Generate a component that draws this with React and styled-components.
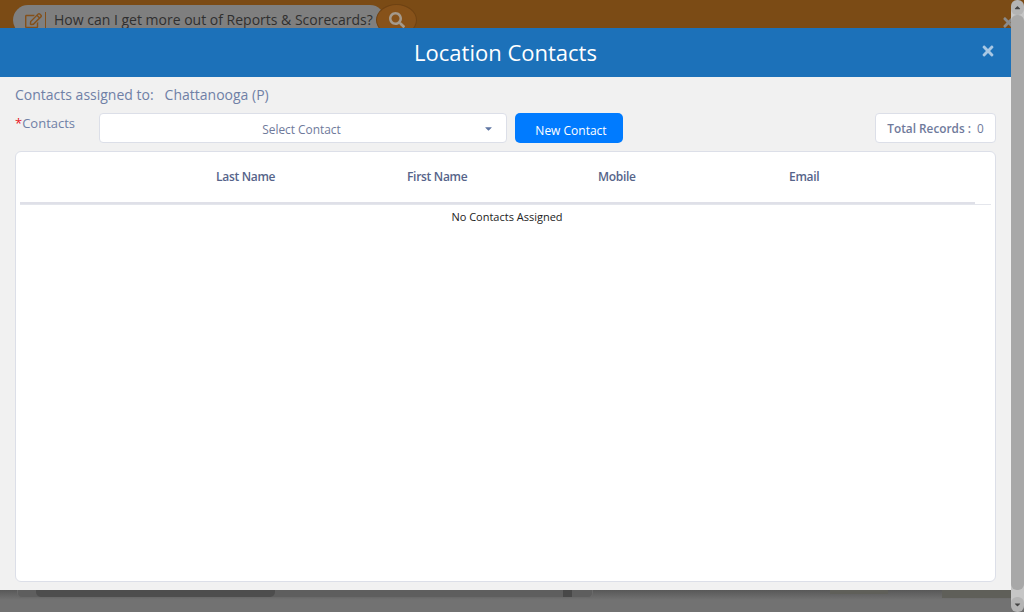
import React from 'react';
import styled, { createGlobalStyle } from 'styled-components';
import { FaSearch, FaRegEdit, FaTimes, FaCaretDown, FaCaretUp } from 'react-icons/fa';

const GlobalStyle = createGlobalStyle`
  html, body {
    margin: 0;
    height: 100%;
    overflow: hidden;
    font-family: "Open Sans", "Liberation Sans", sans-serif;
  }
`;

const Page = styled.div`
  display: flex;
  width: 1024px;
  height: 612px;
  overflow: hidden;
  position: relative;
`;

const Main = styled.div`
  display: flex;
  flex-direction: column;
  flex: 1;
  min-width: 0;
`;

// dimmed page behind the modal
const TopStrip = styled.div`
  height: 28px;
  flex: none;
  background: #7b4b15;
  padding: 5px 0 0 13px;
  box-sizing: border-box;
  overflow: hidden;
  display: flex;
  align-items: flex-start;
`;

const SearchPill = styled.div`
  display: flex;
  align-items: center;
  width: 372px;
  height: 30px;
  flex: none;
  padding-left: 12px;
  box-sizing: border-box;
  background: #7f7f7f;
  border-radius: 15px;
  color: #2f2f2f;
  font-size: 14px;
  line-height: 16px;
  white-space: nowrap;
`;

const PillIcon = styled.span`
  display: flex;
  color: #84501a;
  font-size: 17px;
  padding-right: 3px;
  margin-right: 8px;
  border-right: 1px solid #84501a;
  height: 17px;
`;

const SearchButton = styled.div`
  width: 41px;
  height: 32px;
  margin: -1px 0 0 -9px;
  flex: none;
  position: relative;
  display: flex;
  align-items: center;
  justify-content: center;
  background: #87521a;
  border: 1px solid #6e4213;
  border-radius: 50%;
  color: #a59a8c;
  font-size: 16px;
  box-sizing: border-box;
`;

const GhostClose = styled.span`
  position: absolute;
  top: 15px;
  left: 1001px;
  display: flex;
  color: #8b8b8b;
  font-size: 15px;
`;

const Modal = styled.div`
  flex: none;
  height: 562px;
  display: flex;
  flex-direction: column;
  background: #f1f1f1;
  position: relative;
`;

const ModalHeader = styled.div`
  height: 49px;
  flex: none;
  padding-bottom: 2px;
  box-sizing: border-box;
  display: flex;
  align-items: center;
  justify-content: center;
  background: #1c71b9;
  color: #fff;
`;

const ModalTitle = styled.h2`
  margin: 0;
  font-size: 22px;
  font-weight: 400;
`;

const CloseButton = styled.span`
  position: absolute;
  top: 15px;
  right: 15px;
  display: flex;
  color: #a9c8e4;
  font-size: 16px;
`;

const ModalBody = styled.div`
  flex: 1;
  display: flex;
  flex-direction: column;
  padding: 0 15px 8px;
  min-height: 0;
`;

const AssignedRow = styled.div`
  height: 36px;
  flex: none;
  padding-bottom: 2px;
  box-sizing: border-box;
  display: flex;
  align-items: center;
  gap: 11px;
  color: #6f80a6;
  font-size: 14px;
`;

const ControlsRow = styled.div`
  display: flex;
  align-items: flex-start;
  height: 30px;
  flex: none;
`;

const ContactsLabel = styled.label`
  width: 84px;
  flex: none;
  color: #6f80a6;
  font-size: 13px;
  line-height: 20px;
`;

const Required = styled.span`
  color: #e8141c;
`;

const SelectBox = styled.div`
  width: 408px;
  height: 30px;
  flex: none;
  position: relative;
  display: flex;
  align-items: center;
  justify-content: center;
  padding: 1px 3px 0 0;
  box-sizing: border-box;
  background: #fff;
  border: 1px solid #dcdfe8;
  border-radius: 4px;
  color: #6f7a9b;
  font-size: 11.9px;
`;

const Caret = styled.span`
  position: absolute;
  right: 12px;
  top: 9px;
  display: flex;
  color: #5f76a3;
  font-size: 11px;
`;

const NewButton = styled.button`
  width: 108px;
  height: 30px;
  flex: none;
  margin-left: 8px;
  padding: 4px 0 0 4px;
  border: none;
  border-radius: 5px;
  background: #007bff;
  color: #fff;
  font-family: inherit;
  font-size: 12px;
`;

const TotalBox = styled.div`
  width: 121px;
  height: 30px;
  flex: none;
  margin-left: auto;
  display: flex;
  align-items: center;
  justify-content: center;
  gap: 6px;
  box-sizing: border-box;
  background: #fff;
  border: 1px solid #dcdfe8;
  border-radius: 4px;
  color: #6f7a9b;
  font-size: 11.8px;
`;

const TotalLabel = styled.span`
  font-weight: 600;
`;

const TableCard = styled.div`
  flex: 1;
  margin-top: 8px;
  padding: 0 4px;
  background: #fff;
  border: 1px solid #dcdfe8;
  border-radius: 6px;
  min-height: 0;
`;

const HeadRow = styled.div`
  display: grid;
  grid-template-columns: repeat(4, 191px);
  height: 53px;
  width: 955px;
  padding: 0 0 1px 196px;
  box-sizing: border-box;
  align-items: center;
  border-bottom: 3px solid #dfe0e8;
  color: #56648a;
  font-size: 12px;
  font-weight: 600;
  letter-spacing: -0.3px;
`;

const HeadRule = styled.div`
  height: 1px;
  margin-top: -1px;
  background: #e4e6ec;
`;

const EmptyRow = styled.div`
  padding-left: 3px;
  text-align: center;
  color: #222;
  font-size: 11px;
  line-height: 24px;
`;

const BottomStrip = styled.div`
  flex: 1;
  display: flex;
  align-items: flex-start;
  background: linear-gradient(#585858, #727272 10px);
`;

const BehindScrollTrack = styled.div`
  width: 576px;
  height: 8px;
  margin-left: 17px;
  flex: none;
  display: flex;
  box-sizing: border-box;
  border: 1px solid #6a6a6a;
  border-top: none;
  border-radius: 0 0 5px 5px;
  background: #5e5e5e;
`;

const BehindThumb = styled.div`
  width: 239px;
  margin-left: 18px;
  background: #4d4d4d;
  border-radius: 0 0 5px 5px;
`;

const BehindArrowCap = styled.div`
  width: 9px;
  margin-left: 288px;
  background: #484848;
`;

const BehindTab = styled.div`
  flex: none;
  width: ${p => p.$width}px;
  height: ${p => p.$height}px;
  margin-left: ${p => p.$left}px;
  background: #5f5f59;
`;

const Scrollbar = styled.div`
  width: 13px;
  flex: none;
  position: relative;
  z-index: 1;
  display: flex;
  flex-direction: column;
  align-items: center;
  background: linear-gradient(#7b4b15 8px, #c6c6c6 8px, #c6c6c6 604px, #707070 604px);
`;

const ScrollArrow = styled.span`
  height: 15px;
  width: 100%;
  flex: none;
  display: flex;
  align-items: center;
  justify-content: center;
  border-radius: 6px;
  background: #b4b4b4;
  color: #444;
  font-size: 9px;
`;

const ScrollThumb = styled.div`
  flex: 1;
  width: 100%;
  margin-bottom: 7px;
  border-radius: 6px;
  background: #a8a8a8;
`;

const columns = ['Last Name', 'First Name', 'Mobile', 'Email'];

export default function App() {
  return (
    <Page>
      <GlobalStyle />
      <Main>
        <TopStrip>
          <SearchPill>
            <PillIcon><FaRegEdit /></PillIcon>
            How can I get more out of Reports &amp; Scorecards?
          </SearchPill>
          <SearchButton><FaSearch /></SearchButton>
          <GhostClose><FaTimes /></GhostClose>
        </TopStrip>
        <Modal>
          <ModalHeader>
            <ModalTitle>Location Contacts</ModalTitle>
            <CloseButton><FaTimes /></CloseButton>
          </ModalHeader>
          <ModalBody>
            <AssignedRow>
              <span>Contacts assigned to:</span>
              <span>Chattanooga (P)</span>
            </AssignedRow>
            <ControlsRow>
              <ContactsLabel><Required>*</Required>Contacts</ContactsLabel>
              <SelectBox>
                Select Contact
                <Caret><FaCaretDown /></Caret>
              </SelectBox>
              <NewButton>New Contact</NewButton>
              <TotalBox>
                <TotalLabel>Total Records :</TotalLabel>
                <span>0</span>
              </TotalBox>
            </ControlsRow>
            <TableCard>
              <HeadRow>
                {columns.map(name => <span key={name}>{name}</span>)}
              </HeadRow>
              <HeadRule />
              <EmptyRow>No Contacts Assigned</EmptyRow>
            </TableCard>
          </ModalBody>
        </Modal>
        <BottomStrip>
          <BehindScrollTrack>
            <BehindThumb />
            <BehindArrowCap />
          </BehindScrollTrack>
          <BehindTab $left={237} $width={58} $height={4} />
          <BehindTab $left={54} $width={69} $height={8} />
        </BottomStrip>
      </Main>
      <Scrollbar>
        <ScrollArrow><FaCaretUp /></ScrollArrow>
        <ScrollThumb />
        <ScrollArrow><FaCaretDown /></ScrollArrow>
      </Scrollbar>
    </Page>
  );
}
